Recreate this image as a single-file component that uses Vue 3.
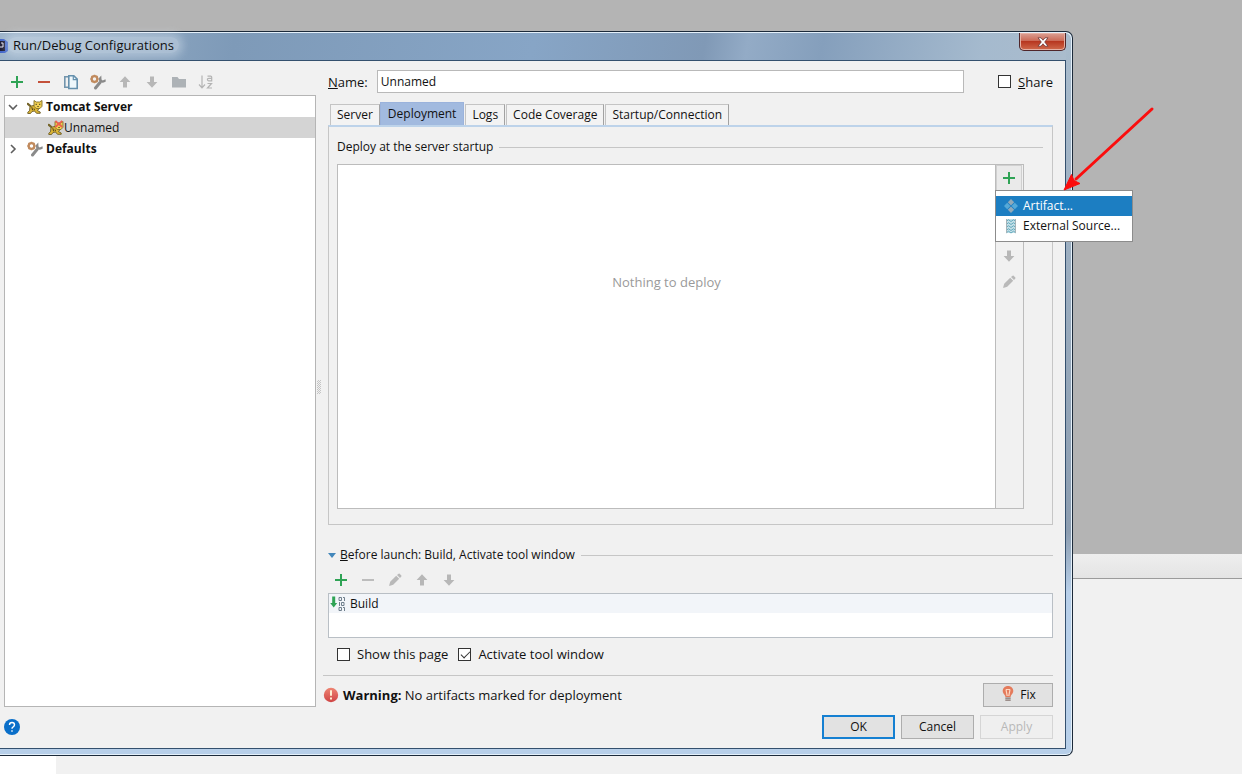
<script setup>
import { ref } from 'vue'

const name = ref('Unnamed')
const share = ref(false)
const showPage = ref(false)
const activateWindow = ref(true)
const activeTab = ref('Deployment')

const tabs = ['Server', 'Deployment', 'Logs', 'Code Coverage', 'Startup/Connection']

const treeTools = [
  { icon: 'plus', label: 'Add' },
  { icon: 'minus', label: 'Remove' },
  { icon: 'copy', label: 'Copy' },
  { icon: 'wrench', label: 'Edit defaults' },
  { icon: 'up', label: 'Move up' },
  { icon: 'down', label: 'Move down' },
  { icon: 'folder', label: 'Create folder' },
  { icon: 'sort', label: 'Sort' },
]

const launchTools = [
  { icon: 'plus', label: 'Add task' },
  { icon: 'minus-off', label: 'Remove task' },
  { icon: 'pencil', label: 'Edit task' },
  { icon: 'up', label: 'Move task up' },
  { icon: 'down', label: 'Move task down' },
]

const deployTools = [
  { icon: 'minus-off', label: 'Remove artifact' },
  { icon: 'up', label: 'Move artifact up' },
  { icon: 'down', label: 'Move artifact down' },
  { icon: 'pencil', label: 'Edit artifact' },
]
</script>

<template>
  <svg class="sprite" aria-hidden="true">
    <defs>
      <linearGradient id="g-red" x1="0" y1="0" x2="0" y2="1">
        <stop offset="0" stop-color="#ee8573" />
        <stop offset="1" stop-color="#cf4444" />
      </linearGradient>
    </defs>
    <symbol id="plus" viewBox="0 0 16 16"><path d="M8 2v12M2 8h12" stroke="#2fa355" stroke-width="2" /></symbol>
    <symbol id="minus" viewBox="0 0 16 16"><path d="M2 8h12" stroke="#c4513a" stroke-width="2" /></symbol>
    <symbol id="minus-off" viewBox="0 0 16 16"><path d="M2 8h12" stroke="#bdbdbd" stroke-width="2" /></symbol>
    <symbol id="copy" viewBox="0 0 16 16">
      <path d="M5 2.8H1.8v10.4H5" fill="none" stroke="#7295ad" stroke-width="1.6" />
      <path d="M5.8 1.8h5l3.4 3.4v9.3H5.8z" fill="#eef7fb" stroke="#6590ad" stroke-width="1.6" />
      <path d="M10.3 2v3.7H14" fill="none" stroke="#6590ad" stroke-width="1.2" />
    </symbol>
    <symbol id="wrench" viewBox="0 0 16 16">
      <circle cx="4.5" cy="5" r="2.8" fill="none" stroke="#c18b5e" stroke-width="2.2" />
      <path d="M4.5.8v1.4M4.5 7.8v1.4M.3 5h1.4M7.3 5h1.4M1.5 2l1 1M6.5 7l1 1M1.5 8l1-1M6.5 3l1-1" stroke="#c18b5e" stroke-width="1.4" />
      <path d="M5.500 14 10 8.500" stroke="#8a8a8a" stroke-width="3" stroke-linecap="round" />
      <path d="M11.300 1.500Q8.800 3 9 6.500 11 10.500 15.800 7.500L15.500 5.200l-2.800 1.400-1.200-1.200z" fill="#8a8a8a" />
    </symbol>
    <symbol id="up" viewBox="0 0 16 16"><path d="M8 2.2 13.4 8H10v5.6H6V8H2.6z" fill="#b7b7b7" /></symbol>
    <symbol id="down" viewBox="0 0 16 16"><path d="M8 13.8 2.6 8H6V2.4h4V8h3.4z" fill="#b7b7b7" /></symbol>
    <symbol id="folder" viewBox="0 0 16 16"><path d="M1 3h5.5L8 5h7v8.5H1z" fill="#adb2b6" /></symbol>
    <symbol id="sort" viewBox="0 0 16 16">
      <path d="M4 1.5v12M1 10.5l3 3.3 3-3.3" fill="none" stroke="#b4b4b4" stroke-width="1.2" />
      <path d="M9.5 2.2h3.2q1 0 1 1v3.6h-3q-1.3 0-1.3-1.2 0-1.2 1.3-1.2h3M9.5 9.5h4l-4 4.5h4.5" fill="none" stroke="#b4b4b4" stroke-width="1.2" />
    </symbol>
    <symbol id="pencil" viewBox="0 0 16 16">
      <path d="M2 14l1.200-4.200 6-6 3 3-6 6zM10 3l1.600-1.300q.6-.4 1.100.1l1.600 1.600q.5.6 0 1.100L13 6z" fill="#b9b9b9" />
    </symbol>
    <symbol id="tomcat" viewBox="0 0 16 16">
      <path d="M.8 4.800 3.300 7" stroke="#76652a" stroke-width="2.200" stroke-linecap="round" />
      <path d="M3 7.500 8 6l4 3.500-1.500 2.200 2.700 1.300v1.300H9.500L7.500 12 5 12.500l-1.500 2H.8v-1.300l1.700-1.400z" fill="#dcb535" stroke="#6b5b26" stroke-width=".9" stroke-linejoin="round" />
      <path d="M7 1.500 9.300 3h3.200L15 1.500v5.800l-2 2.200H9.200L7 7.300z" fill="#efcf52" stroke="#85712a" stroke-width=".9" stroke-linejoin="round" />
      <path d="M8.600 5.300h1.300M12 5.300h1.300M10.400 7.500h1.300M4.800 8.200l.8 3M7 9.500l.5 1.700" stroke="#4a3f1c" stroke-width="1" />
    </symbol>
    <symbol id="tomcat-error" viewBox="0 0 16 16">
      <use href="#tomcat" />
      <path d="m7.400.8 6.800 6.400M14.200.8 7.400 7.200" stroke="#ee604f" stroke-width="1.800" />
    </symbol>
    <symbol id="artifact" viewBox="0 0 16 16">
      <path d="m8 1 3.200 3.200L8 7.400 4.800 4.200zM8 8.600l3.200 3.200L8 15l-3.200-3.200z" fill="#91a9b8" />
      <path d="m4.200 4.800 3.200 3.200-3.200 3.200L1 8zM11.800 4.800 15 8l-3.200 3.200L8.600 8z" fill="#55a9d8" />
    </symbol>
    <symbol id="source" viewBox="0 0 16 16">
      <path d="M3 1h10v14H3z" fill="#c4e0e8" />
      <path d="M3 3.500 5.500 1.700 8 3.500l2.500-1.800L13 3.500M3 6.500l2.500-1.800L8 6.500l2.500-1.800L13 6.500M3 9.500l2.500-1.800L8 9.500l2.500-1.800L13 9.500M3 12.500l2.500-1.800L8 12.500l2.500-1.800 2.500 1.800M3 15l2.500-1.800L8 15l2.500-1.800L13 15" fill="none" stroke="#62a9bd" stroke-width="1" />
      <path d="M3.500 1v14M12.500 1v14" stroke="#a6b3b8" stroke-width="1" />
    </symbol>
    <symbol id="build" viewBox="0 0 16 16">
      <path d="M2.200.5h3v6.500h2L3.700 11.500.2 7h2z" fill="#2fa355" />
      <g fill="none" stroke="#6f7f8c" stroke-width="1">
        <path d="M9 1.500h2.500v3H9zM13 1.500h1.500v3.500M9.500 6v4M11.500 6.500H14v3h-2.500zM9 11.500h2.500v3H9zM13 11.500h1.500v3.500" />
      </g>
    </symbol>
    <symbol id="warning" viewBox="0 0 16 16">
      <circle cx="8" cy="8" r="7.200" fill="url(#g-red)" />
      <path d="M8 3.200v5.600M8 10.500v2" stroke="#fff0d2" stroke-width="2" />
    </symbol>
    <symbol id="bulb" viewBox="0 0 16 16">
      <path d="M8 0C4.900 0 2.700 2.200 2.700 5c0 2 1.400 3.200 2.300 4.500l.4 1.500h5.200l.4-1.500C11.900 8.200 13.300 7 13.300 5c0-2.800-2.200-5-5.300-5z" fill="#e47b5c" />
      <path d="M6 3.500 7.200 10M10 3.500 8.800 10M6 3.500h4" fill="none" stroke="#ffd9c4" stroke-width="1.200" />
      <path d="M5.300 12.200h5.400M5.300 14.200h5.400" stroke="#85736d" stroke-width="1.300" />
    </symbol>
    <symbol id="help" viewBox="0 0 16 16">
      <circle cx="8" cy="8" r="8" fill="#0a6fc9" />
      <path d="M5.500 6q0-2.500 2.500-2.500T10.500 5.800Q10.500 7 9.200 7.800 8 8.500 8 9.800M8 11.300v1.500" fill="none" stroke="#fff" stroke-width="1.400" />
    </symbol>
  </svg>

  <div class="desktop">
    <div class="backdrop" aria-hidden="true">
      <div class="editor"></div>
      <div class="strip"></div>
      <div class="lower"></div>
    </div>

    <section class="window" aria-label="Run/Debug Configurations">
      <header class="titlebar">
        <svg class="app-icon" viewBox="0 0 8 16" aria-hidden="true">
          <path d="M0 1h4l4 3v9l-3 2H0z" fill="#3d62c8" />
          <path d="M0 3h5v10H0z" fill="#15132b" />
          <path d="M1 5h2v4H0" fill="none" stroke="#e8e8f5" stroke-width="1" />
        </svg>
        <h1>Run/Debug Configurations</h1>
        <button class="close" aria-label="Close">
          <svg viewBox="0 0 12 10" aria-hidden="true">
            <path d="M1 .8h3l2 2.400L8 .8h3L7.700 5 11 9.200H8L6 6.800 4 9.200H1L4.300 5z" fill="#fff" stroke="#6b3535" stroke-width=".8" />
          </svg>
        </button>
      </header>

      <div class="content">
        <div class="main">
          <aside class="side">
            <div class="toolbar tree-tools">
              <button v-for="t in treeTools" :key="t.icon" class="tool" :aria-label="t.label">
                <svg class="icon"><use :href="'#' + t.icon" /></svg>
              </button>
            </div>
            <ul class="tree">
              <li class="node">
                <svg class="chevron" viewBox="0 0 10 10"><path d="m1 3 4 4 4-4" /></svg>
                <svg class="icon"><use href="#tomcat" /></svg>
                <b>Tomcat Server</b>
              </li>
              <li class="node child selected">
                <svg class="icon"><use href="#tomcat-error" /></svg>
                <span>Unnamed</span>
              </li>
              <li class="node">
                <svg class="chevron" viewBox="0 0 10 10"><path d="m3 1 4 4-4 4" /></svg>
                <svg class="icon"><use href="#wrench" /></svg>
                <b>Defaults</b>
              </li>
            </ul>
          </aside>

          <div class="grip" aria-hidden="true"></div>

          <div class="form">
            <div class="name-row">
              <label for="config-name"><u>N</u>ame:</label>
              <input id="config-name" v-model="name" class="name-input" type="text" />
              <label class="check"><input v-model="share" type="checkbox" /><span><u>S</u>hare</span></label>
            </div>

            <div class="tabs" role="tablist">
              <button
                v-for="tab in tabs"
                :key="tab"
                class="tab"
                :class="{ active: tab === activeTab }"
                role="tab"
                :aria-selected="tab === activeTab"
                @click="activeTab = tab"
              >{{ tab }}</button>
            </div>

            <div class="panel" role="tabpanel">
              <div class="caption"><span>Deploy at the server startup</span></div>
              <div class="deploy">
                <div class="deploy-list">Nothing to deploy</div>
                <div class="deploy-tools">
                  <div class="add-anchor">
                    <button class="tool pressed" aria-label="Add artifact">
                      <svg class="icon"><use href="#plus" /></svg>
                    </button>
                    <div class="menu" role="menu">
                      <button class="menu-item highlighted" role="menuitem">
                        <svg class="icon"><use href="#artifact" /></svg>Artifact...
                      </button>
                      <button class="menu-item" role="menuitem">
                        <svg class="icon"><use href="#source" /></svg>External Source...
                      </button>
                    </div>
                    <svg class="pointer" viewBox="0 0 94 88" aria-hidden="true">
                      <path d="M89 6 13 76" stroke="#fb0d0d" stroke-width="3" stroke-linecap="round" />
                      <path d="M1 87 8.500 71.500 11 77.500 17 80.500z" fill="#fb0d0d" stroke="#fb0d0d" />
                    </svg>
                  </div>
                  <button v-for="t in deployTools" :key="t.icon" class="tool" :aria-label="t.label">
                    <svg class="icon"><use :href="'#' + t.icon" /></svg>
                  </button>
                </div>
              </div>
            </div>

            <div class="caption launch-caption">
              <svg class="triangle" viewBox="0 0 8 5" aria-hidden="true"><path d="M0 0h8L4 5z" fill="#4387bb" /></svg>
              <span><u>B</u>efore launch: Build, Activate tool window</span>
            </div>
            <div class="toolbar launch-tools">
              <button v-for="t in launchTools" :key="t.icon" class="tool" :aria-label="t.label">
                <svg class="icon"><use :href="'#' + t.icon" /></svg>
              </button>
            </div>
            <ul class="tasks">
              <li><svg class="icon"><use href="#build" /></svg>Build</li>
            </ul>
            <div class="checks">
              <label class="check"><input v-model="showPage" type="checkbox" /><span>Show this page</span></label>
              <label class="check"><input v-model="activateWindow" type="checkbox" /><span>Activate tool window</span></label>
            </div>
            <div class="warning-row">
              <svg class="icon"><use href="#warning" /></svg>
              <p><b>Warning:</b> No artifacts marked for deployment</p>
              <button class="btn fix"><svg class="icon"><use href="#bulb" /></svg>Fix</button>
            </div>
          </div>
        </div>

        <footer class="footer">
          <button class="help" aria-label="Help"><svg class="icon"><use href="#help" /></svg></button>
          <button class="btn primary">OK</button>
          <button class="btn">Cancel</button>
          <button class="btn" disabled>Apply</button>
        </footer>
      </div>
    </section>
  </div>
</template>

<style>
body {
  background: #f1f1f1;
}
</style>

<style scoped>
* {
  box-sizing: border-box;
}
.sprite {
  position: absolute;
  width: 0;
  height: 0;
}
.desktop {
  position: relative;
  display: flex;
  min-height: 100vh;
  padding: 31px 169px 18px 0;
  color: #111;
  font: 13px/18px "Open Sans", "Noto Sans CJK SC", sans-serif;
}
.backdrop {
  position: absolute;
  inset: 0;
  display: flex;
  flex-direction: column;
}
.editor {
  height: 554px;
  background: #b4b4b4;
}
.strip {
  height: 25px;
  background: linear-gradient(#eee, #e4e4e4);
  border-bottom: 1px solid #9b9b9b;
}
.lower {
  flex: 1;
  background: linear-gradient(90deg, #fff 56px, #f1f1f1 56px);
}
.window {
  position: relative;
  flex: 1;
  display: flex;
  flex-direction: column;
  min-width: 0;
  border: 1px solid #1c2a3a;
  border-left: 0;
  border-radius: 0 7px 7px 0;
  padding: 0 6px 6px 0;
  background: linear-gradient(#a9bccd, #8c9db0 500px, #b7cfe9 560px, #b7cfe9);
  box-shadow: inset -1px 1px 0 #e4f0fa, inset 0 -1px 0 #e4f0fa;
}
.titlebar {
  display: flex;
  align-items: flex-start;
  height: 27px;
  margin: 1px 0 0;
  background: linear-gradient(100deg, #9db4ca, #7e9ab8 22%, #87a5c6 50%, #8099b6 66%, #93abc6 70%, #859fbc 77%, #a5bace 92%, #aabccd);
}
.app-icon {
  width: 8px;
  height: 16px;
  margin-top: 5px;
}
h1 {
  margin: 4px auto 0 0;
  padding: 0 5px;
  border-radius: 8px;
  background: rgba(225, 235, 244, 0.4);
  box-shadow: 0 0 8px 4px rgba(225, 235, 244, 0.4);
  font-size: 13px;
  font-weight: 400;
  line-height: 16px;
}
.close {
  display: grid;
  place-items: center;
  width: 47px;
  height: 18px;
  padding: 0;
  border: 1px solid #50262a;
  border-top: 0;
  border-radius: 0 0 5px 5px;
  background: linear-gradient(#dba094, #cb6b58 45%, #b73720 50%, #d06a4c);
  box-shadow: inset 0 0 0 1px #e5b1a5;
}
.close svg {
  width: 12px;
  height: 10px;
}
.content {
  flex: 1;
  display: flex;
  flex-direction: column;
  border: 1px solid #34506e;
  border-left: 0;
  background: #f1f1f1;
}
.main {
  flex: 1;
  display: flex;
}
.side {
  display: flex;
  flex-direction: column;
  width: 316px;
}
.toolbar {
  display: flex;
  align-items: center;
}
.tree-tools {
  height: 34px;
  padding: 8px 0 0 3px;
}
.tool {
  display: grid;
  place-items: center;
  width: 27px;
  height: 26px;
  padding: 0;
  border: 0;
  background: none;
}
.icon {
  display: block;
  flex: none;
  width: 16px;
  height: 16px;
}
.tree {
  flex: 1;
  margin: 0 0 0 4px;
  padding: 0;
  border: 1px solid #b5b5b5;
  background: #fff;
  font-size: 12px;
  list-style: none;
}
.node {
  display: flex;
  align-items: center;
  height: 21px;
  padding-left: 3px;
}
.node b {
  margin-left: 3px;
}
.child {
  padding-left: 43px;
}
.selected {
  background: #d4d4d4;
}
.chevron {
  width: 10px;
  height: 10px;
  margin-right: 9px;
  fill: none;
  stroke: #5e5e5e;
  stroke-width: 1.6;
}
.grip {
  align-self: center;
  width: 4px;
  height: 14px;
  margin: 6px 3px 0 1px;
  background: repeating-conic-gradient(#c4c4c4 0 25%, #f1f1f1 0 50%) 0 0 / 2px 2px;
}
.form {
  flex: 1;
  display: flex;
  flex-direction: column;
  min-width: 0;
  padding: 9px 12px 0 4px;
}
.name-row {
  display: flex;
  align-items: center;
}
.name-input {
  flex: 1;
  min-width: 0;
  height: 23px;
  margin: 0 34px 0 9px;
  padding: 0 3px;
  border: 1px solid #b9b9b9;
  background: #fff;
  color: inherit;
  font: inherit;
  font-size: 12px;
}
.check {
  display: flex;
  align-items: center;
  gap: 7px;
}
.check input {
  flex: none;
  appearance: none;
  width: 13px;
  height: 13px;
  margin: 0;
  border: 1px solid #333;
  background: #fff;
}
.check input:checked::after {
  content: "";
  display: block;
  width: 8px;
  height: 4px;
  margin: 2px 0 0 2px;
  border: solid #333;
  border-width: 0 0 1px 1px;
  transform: rotate(-45deg);
}
.tabs {
  display: flex;
  align-items: flex-end;
  height: 32px;
  padding-left: 2px;
}
.tab {
  height: 21px;
  margin-right: 1px;
  padding: 0 6px;
  border: 1px solid #c4c4c4;
  border-right-color: #a2a2a2;
  border-bottom: 0;
  background: #f3f3f3;
  color: inherit;
  font: inherit;
  font-size: 12px;
}
.tab.active {
  height: 23px;
  margin: 0 1px 0 -1px;
  padding: 0 7px;
  border-color: #9bb3dc;
  background: #a2badf;
}
.panel {
  flex: 1;
  display: flex;
  flex-direction: column;
  padding: 11px 9px 15px 8px;
  border: 1px solid #c6c6c6;
  border-top: 2px solid #bdd3ea;
}
.caption {
  display: flex;
  align-items: center;
  font-size: 12px;
}
.caption::after {
  content: "";
  flex: 1;
  height: 1px;
  margin-left: 6px;
  background: #c6c6c6;
}
.deploy {
  flex: 1;
  display: flex;
  margin: 8px 19px 0 0;
  border: 1px solid #bcbcbc;
}
.deploy-list {
  flex: 1;
  padding-top: 108px;
  background: #fff;
  color: #9a9a9a;
  text-align: center;
}
.deploy-tools {
  width: 28px;
  border-left: 1px solid #bcbcbc;
}
.deploy-tools .tool {
  width: 26px;
}
.add-anchor {
  position: relative;
}
.pressed {
  border: 1px solid #d0d0d0;
  background: #eaeaea;
}
.menu {
  position: absolute;
  top: 25px;
  left: -1px;
  z-index: 1;
  width: 138px;
  padding: 5px 0;
  border: 1px solid #8c8c8c;
  background: #fff;
}
.menu-item {
  display: flex;
  align-items: center;
  gap: 4px;
  width: 100%;
  height: 20px;
  padding: 0 7px;
  border: 0;
  background: none;
  color: inherit;
  font: inherit;
  font-size: 12px;
  white-space: nowrap;
}
.highlighted {
  background: #1c7ec2;
  color: #fff;
}
.pointer {
  position: absolute;
  bottom: 0;
  left: 67px;
  z-index: 2;
  width: 94px;
  height: 88px;
  fill: none;
  pointer-events: none;
}
.launch-caption {
  margin-top: 21px;
}
.triangle {
  width: 8px;
  height: 5px;
  margin-right: 4px;
}
.launch-tools {
  height: 29px;
  margin-left: -1px;
  padding-top: 2px;
}
.tasks {
  height: 45px;
  margin: 0;
  padding: 0;
  border: 1px solid #b9bfc5;
  background: #fff;
  font-size: 12px;
  list-style: none;
}
.tasks li {
  display: flex;
  align-items: center;
  gap: 4px;
  height: 19px;
  padding-left: 1px;
  background: #f2f5f9;
}
.checks {
  display: flex;
  gap: 10px;
  padding: 7px 9px 12px;
}
.warning-row {
  display: flex;
  align-items: center;
  margin-left: -5px;
  padding-top: 7px;
  border-top: 1px solid #c6c6c6;
}
.warning-row p {
  flex: 1;
  margin: 0 0 0 4px;
}
.btn {
  display: flex;
  align-items: center;
  justify-content: center;
  width: 73px;
  height: 24px;
  padding: 0 0 2px;
  border: 1px solid #adadad;
  background: #e2e2e2;
  color: inherit;
  font-family: inherit;
  font-size: 12px;
}
.btn.fix {
  gap: 4px;
  width: 70px;
}
.btn.primary {
  border: 2px solid #1580d2;
}
.btn:disabled {
  border-color: #d5d5d5;
  background: #efefef;
  color: #b8b8b8;
}
.footer {
  display: flex;
  align-items: flex-start;
  gap: 6px;
  padding: 8px 12px 9px 4px;
}
.help {
  margin: 4px auto 0 0;
  padding: 0;
  border: 0;
  background: none;
}
</style>
